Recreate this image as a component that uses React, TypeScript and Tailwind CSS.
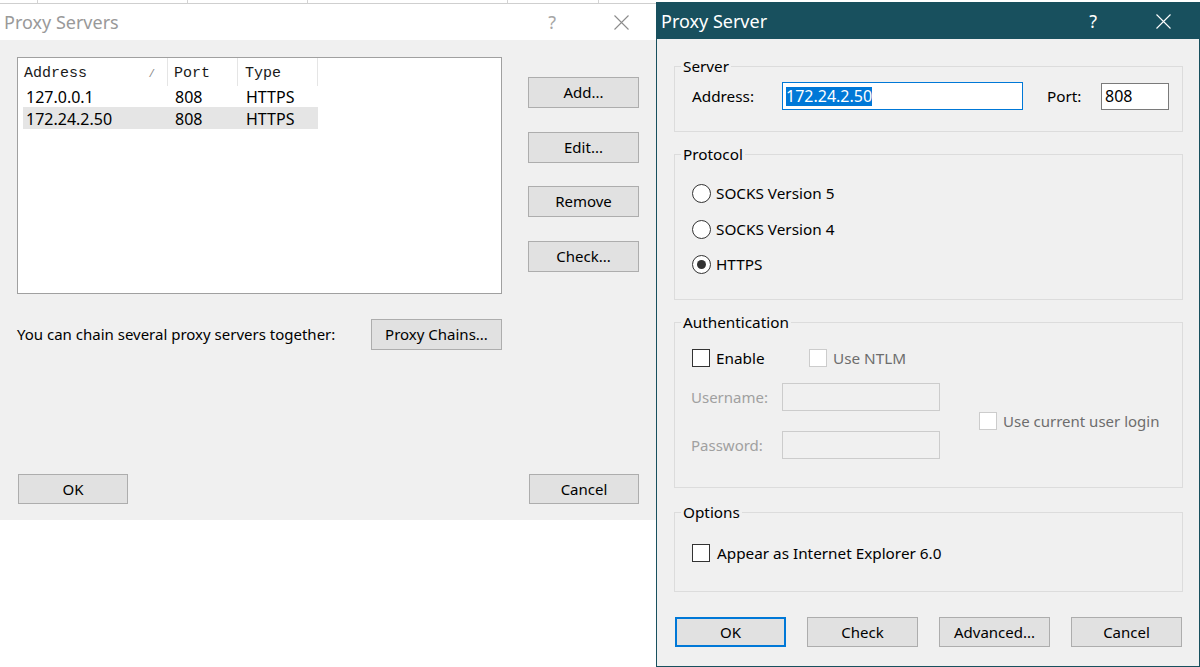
import React from 'react';

const CloseGlyph = ({ color }: { color: string }) => (
  <svg width="15" height="15" viewBox="0 0 15 15" className="block">
    <path d="M0.5 0.5 L14.5 14.5 M14.5 0.5 L0.5 14.5" stroke={color} strokeWidth="1.1" fill="none" />
  </svg>
);

const WinButton = ({ label, className = '' }: { label: string; className?: string }) => (
  <button className={`flex items-center justify-center bg-[#e1e1e1] border border-[#adadad] text-[15px] text-black leading-none ${className}`}>
    {label}
  </button>
);

const Check = ({ disabled = false }: { disabled?: boolean }) => (
  <span className={`block w-[18px] h-[18px] shrink-0 bg-white border ${disabled ? 'border-[#cccccc]' : 'border-[#333333]'}`} />
);

const Radio = ({ checked = false }: { checked?: boolean }) => (
  <span className="flex items-center justify-center w-[19px] h-[19px] shrink-0 rounded-full bg-white border border-[#333333]">
    {checked && <span className="block w-[9px] h-[9px] rounded-full bg-[#333333]" />}
  </span>
);

const servers = [
  { address: '127.0.0.1', port: '808', type: 'HTTPS', selected: false },
  { address: '172.24.2.50', port: '808', type: 'HTTPS', selected: true },
];

const ProxyServersWindow = () => {
  return (
    <div className="absolute left-0 top-[3px] w-[657px] h-[517px] flex flex-col bg-[#f0f0f0] border-t border-[#cfcfcf]">
      {/* Inactive title bar */}
      <div className="h-[36px] shrink-0 flex items-center bg-white pl-[4px] pr-[28px]">
        <span className="flex-1 text-[18px] text-[#999999]">Proxy Servers</span>
        <span className="text-[18px] text-[#a6a6a6] leading-none">?</span>
        <span className="ml-[58px]">
          <CloseGlyph color="#8c8c8c" />
        </span>
      </div>

      <div className="flex-1 flex flex-col pl-[17px] pr-[18px] pt-[17px] pb-[16px]">
        <div className="flex">
          {/* List view */}
          <div className="w-[486px] h-[237px] bg-white border border-[#a0a0a0]">
            <div className="h-[27px] grid grid-cols-[150px_70px_80px] font-['Liberation_Mono',monospace] text-[15px] text-[#1a1a1a]">
              <div className="flex items-center justify-between pl-[6px] pr-[12px] pt-[5px] border-r border-[#e5e5e5]">
                <span>Address</span>
                <span className="text-[11px] text-[#8a8a8a]">/</span>
              </div>
              <div className="flex items-center pl-[6px] pt-[5px] border-r border-[#e5e5e5]">Port</div>
              <div className="flex items-center pl-[7px] pt-[5px] border-r border-[#e5e5e5]">Type</div>
            </div>
            {servers.map((s) => (
              <div
                key={s.address}
                className={`ml-[5px] w-[295px] h-[22px] grid grid-cols-[145px_70px_80px] items-center text-[16px] ${s.selected ? 'bg-[#e5e5e5]' : ''}`}
              >
                <span className="pl-[3px]">{s.address}</span>
                <span className="pl-[7px]">{s.port}</span>
                <span className="pl-[8px]">{s.type}</span>
              </div>
            ))}
          </div>

          <div className="ml-[26px] pt-[20px] flex flex-col gap-[23.5px]">
            <WinButton label="Add..." className="w-[111px] h-[31px]" />
            <WinButton label="Edit..." className="w-[111px] h-[31px]" />
            <WinButton label="Remove" className="w-[111px] h-[31px]" />
            <WinButton label="Check..." className="w-[111px] h-[31px]" />
          </div>
        </div>

        <div className="mt-[25px] flex items-center">
          <span className="w-[354px]">You can chain several proxy servers together:</span>
          <WinButton label="Proxy Chains..." className="w-[131px] h-[31px]" />
        </div>

        <div className="mt-auto flex justify-between pl-[1px]">
          <WinButton label="OK" className="w-[110px] h-[30px]" />
          <WinButton label="Cancel" className="w-[110px] h-[30px]" />
        </div>
      </div>
    </div>
  );
};

const ProxyServerDialog = () => {
  return (
    <div className="absolute left-[656px] top-[2px] w-[544px] h-[665px] flex flex-col bg-[#f0f0f0] border border-[#18505e]">
      {/* Active title bar */}
      <div className="h-[36px] shrink-0 flex items-center bg-[#18505e] pl-[4px] pr-[28px]">
        <span className="flex-1 text-[18px] text-white">Proxy Server</span>
        <span className="text-[18px] text-white leading-none">?</span>
        <span className="ml-[59px]">
          <CloseGlyph color="#ffffff" />
        </span>
      </div>

      <div className="flex-1 flex flex-col pl-[17px] pr-[16px] pt-[17px] text-[15.3px]">
        <fieldset className="h-[76px] border border-[#dcdcdc]">
          <legend className="ml-[6px] px-[2px] leading-[20px]">Server</legend>
          <div className="flex items-center pl-[17px] pt-[6px]">
            <span className="w-[90px]">Address:</span>
            <div className="w-[241px] h-[28px] flex items-center bg-white border border-[#0078d7] pl-[3px]">
              <span className="bg-[#0078d7] text-white text-[16px] leading-[19px]">172.24.2.50</span>
            </div>
            <span className="ml-[24px] w-[54px]">Port:</span>
            <div className="w-[68px] h-[27px] flex items-center bg-white border border-[#7a7a7a] pl-[3px] text-[16px]">
              808
            </div>
          </div>
        </fieldset>

        <fieldset className="mt-[12px] h-[156px] border border-[#dcdcdc]">
          <legend className="ml-[6px] px-[2px] leading-[20px]">Protocol</legend>
          <div className="flex flex-col gap-[16.5px] pl-[17px] pt-[20px]">
            {['SOCKS Version 5', 'SOCKS Version 4', 'HTTPS'].map((p) => (
              <label key={p} className="flex items-center h-[19px]">
                <Radio checked={p === 'HTTPS'} />
                <span className="ml-[5px]">{p}</span>
              </label>
            ))}
          </div>
        </fieldset>

        <fieldset className="mt-[12px] h-[176px] border border-[#dcdcdc]">
          <legend className="ml-[6px] px-[2px] leading-[20px]">Authentication</legend>
          <div className="pl-[17px] pt-[17px]">
            <div className="flex items-center h-[18px]">
              <label className="w-[117px] flex items-center">
                <Check />
                <span className="ml-[6px]">Enable</span>
              </label>
              <label className="flex items-center">
                <Check disabled />
                <span className="ml-[6px] text-[#6d6d6d]">Use NTLM</span>
              </label>
            </div>
            <div className="mt-[16px] flex items-center">
              <div className="flex flex-col gap-[20px]">
                {['Username:', 'Password:'].map((f) => (
                  <div key={f} className="flex items-center">
                    <span className="w-[90px] -ml-[1px] text-[15px] text-[#a0a0a0]">{f}</span>
                    <div className="w-[158px] h-[28px] ml-[1px] bg-[#f0f0f0] border border-[#cccccc]" />
                  </div>
                ))}
              </div>
              <label className="ml-[39px] flex items-center">
                <Check disabled />
                <span className="ml-[6px] text-[15px] text-[#6d6d6d]">Use current user login</span>
              </label>
            </div>
          </div>
        </fieldset>

        <fieldset className="mt-[14px] h-[90px] border border-[#dcdcdc]">
          <legend className="ml-[6px] px-[2px] leading-[20px]">Options</legend>
          <label className="flex items-center pl-[17px] pt-[20px]">
            <Check />
            <span className="ml-[7px]">Appear as Internet Explorer 6.0</span>
          </label>
        </fieldset>

        <div className="mt-[25px] flex justify-between px-[1px]">
          <WinButton label="OK" className="w-[111px] h-[30px] !border-2 !border-[#0078d7]" />
          <WinButton label="Check" className="w-[111px] h-[30px]" />
          <WinButton label="Advanced..." className="w-[111px] h-[30px]" />
          <WinButton label="Cancel" className="w-[111px] h-[30px]" />
        </div>
      </div>
    </div>
  );
};

export default function App() {
  return (
    <div className="relative w-[1200px] h-[667px] overflow-hidden bg-white font-['Noto_Sans',sans-serif] text-[15px] text-black">
      {/* Spreadsheet peeking out behind the windows */}
      <div className="h-[3px] flex">
        <span className="w-[38px] border-r border-[#d4d4d4]" />
        <span className="w-[150px] border-r border-[#d4d4d4]" />
        <span className="w-[120px] border-r border-[#d4d4d4]" />
        <span className="w-[200px] border-r border-[#d4d4d4]" />
        <span className="w-[91px] border-r border-[#d4d4d4]" />
      </div>

      <ProxyServersWindow />
      <ProxyServerDialog />
    </div>
  );
}
